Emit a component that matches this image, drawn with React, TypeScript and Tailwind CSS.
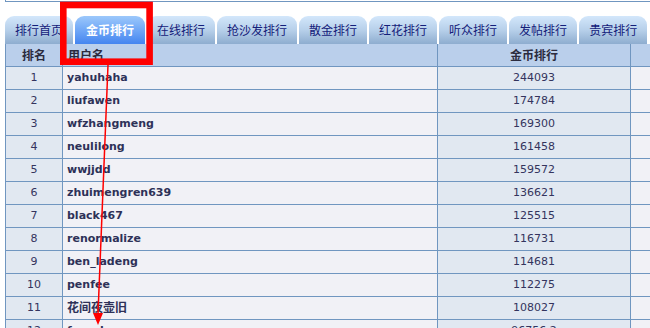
const tabs = [
  '排行首页',
  '金币排行',
  '在线排行',
  '抢沙发排行',
  '散金排行',
  '红花排行',
  '听众排行',
  '发帖排行',
  '贵宾排行',
];

const rows = [
  ['yahuhaha', '244093'],
  ['liufawen', '174784'],
  ['wfzhangmeng', '169300'],
  ['neulilong', '161458'],
  ['wwjjdd', '159572'],
  ['zhuimengren639', '136621'],
  ['black467', '125515'],
  ['renormalize', '116731'],
  ['ben_ladeng', '114681'],
  ['penfee', '112275'],
  ['花间夜壶旧', '108027'],
  ['fanrok', '96756.2'],
];

const cjk = '"Noto Sans CJK SC", sans-serif';
const latin = '"DejaVu Sans", "Noto Sans CJK SC", sans-serif';

export default function App() {
  return (
    <div className="relative w-[650px] h-[328px] overflow-hidden bg-white">
      <div className="pl-[5px] w-[680px]">
        {/* bottom of the box above */}
        <div className="h-[2px] border-l border-b border-[#7096c0]" />

        {/* tabs */}
        <div className="mt-[14px] flex gap-[2px] h-[28px]" style={{ fontFamily: cjk }}>
          {tabs.map((t, i) =>
            i === 1 ? (
              <div
                key={t}
                className="h-full px-[11px] rounded-t-[9px] bg-gradient-to-b from-[#9cc8fb] to-[#4485f0] text-white font-bold text-[12px] flex items-center"
              >
                {t}
              </div>
            ) : (
              <div
                key={t}
                className="h-full px-[10px] rounded-t-[9px] bg-gradient-to-b from-[#d3e7fb] via-[#b7d0ea] to-[#8eadcf] text-[#14207a] text-[12px] flex items-center"
              >
                {t}
              </div>
            )
          )}
        </div>

        {/* table */}
        <div className="border-l border-[#7096c0]">
          <div className="grid grid-cols-[57px_375px_193px_1fr] h-[23px] bg-[#bacfeb] text-[#2b2b3e] font-bold text-[12px]" style={{ fontFamily: cjk }}>
            <div className="border-r border-b border-[#7096c0] flex items-center justify-center">排名</div>
            <div className="border-r border-b border-[#7096c0] flex items-center pl-[5px]">用户名</div>
            <div className="border-r border-b border-[#7096c0] flex items-center justify-center">金币排行</div>
            <div className="border-b border-[#7096c0]" />
          </div>
          {rows.map(([name, coins], i) => (
            <div
              key={i}
              className="grid grid-cols-[57px_375px_193px_1fr] h-[23px] text-[11px] text-[#34345e]"
              style={{ fontFamily: latin }}
            >
              <div className="bg-[#e1e8f1] border-r border-b border-[#7096c0] flex items-center justify-center">
                {i + 1}
              </div>
              <div
                className={
                  /[^\x00-\x7f]/.test(name)
                    ? 'bg-[#f1f1f6] border-r border-b border-[#7096c0] flex items-center pl-[4px] font-bold text-[12px] text-[#2e3158]'
                    : 'bg-[#f1f1f6] border-r border-b border-[#7096c0] flex items-center pl-[4px] font-bold text-[#2e3158]'
                }
              >
                {name}
              </div>
              <div className="bg-[#e1e8f1] border-r border-b border-[#7096c0] flex items-center justify-center">
                {coins}
              </div>
              <div className="bg-[#f1f1f6] border-b border-[#7096c0]" />
            </div>
          ))}
        </div>
      </div>

      {/* red annotation */}
      <svg className="absolute inset-0 pointer-events-none" width="650" height="328">
        <rect x="63.3" y="5" width="86.3" height="56.7" fill="none" stroke="#ff0000" strokeWidth="6.6" />
        <line x1="108" y1="65" x2="98" y2="314" stroke="#ff0000" strokeWidth="1.5" />
        <polygon points="93,313 103,313 98,325" fill="#ff0000" />
      </svg>
    </div>
  );
}
